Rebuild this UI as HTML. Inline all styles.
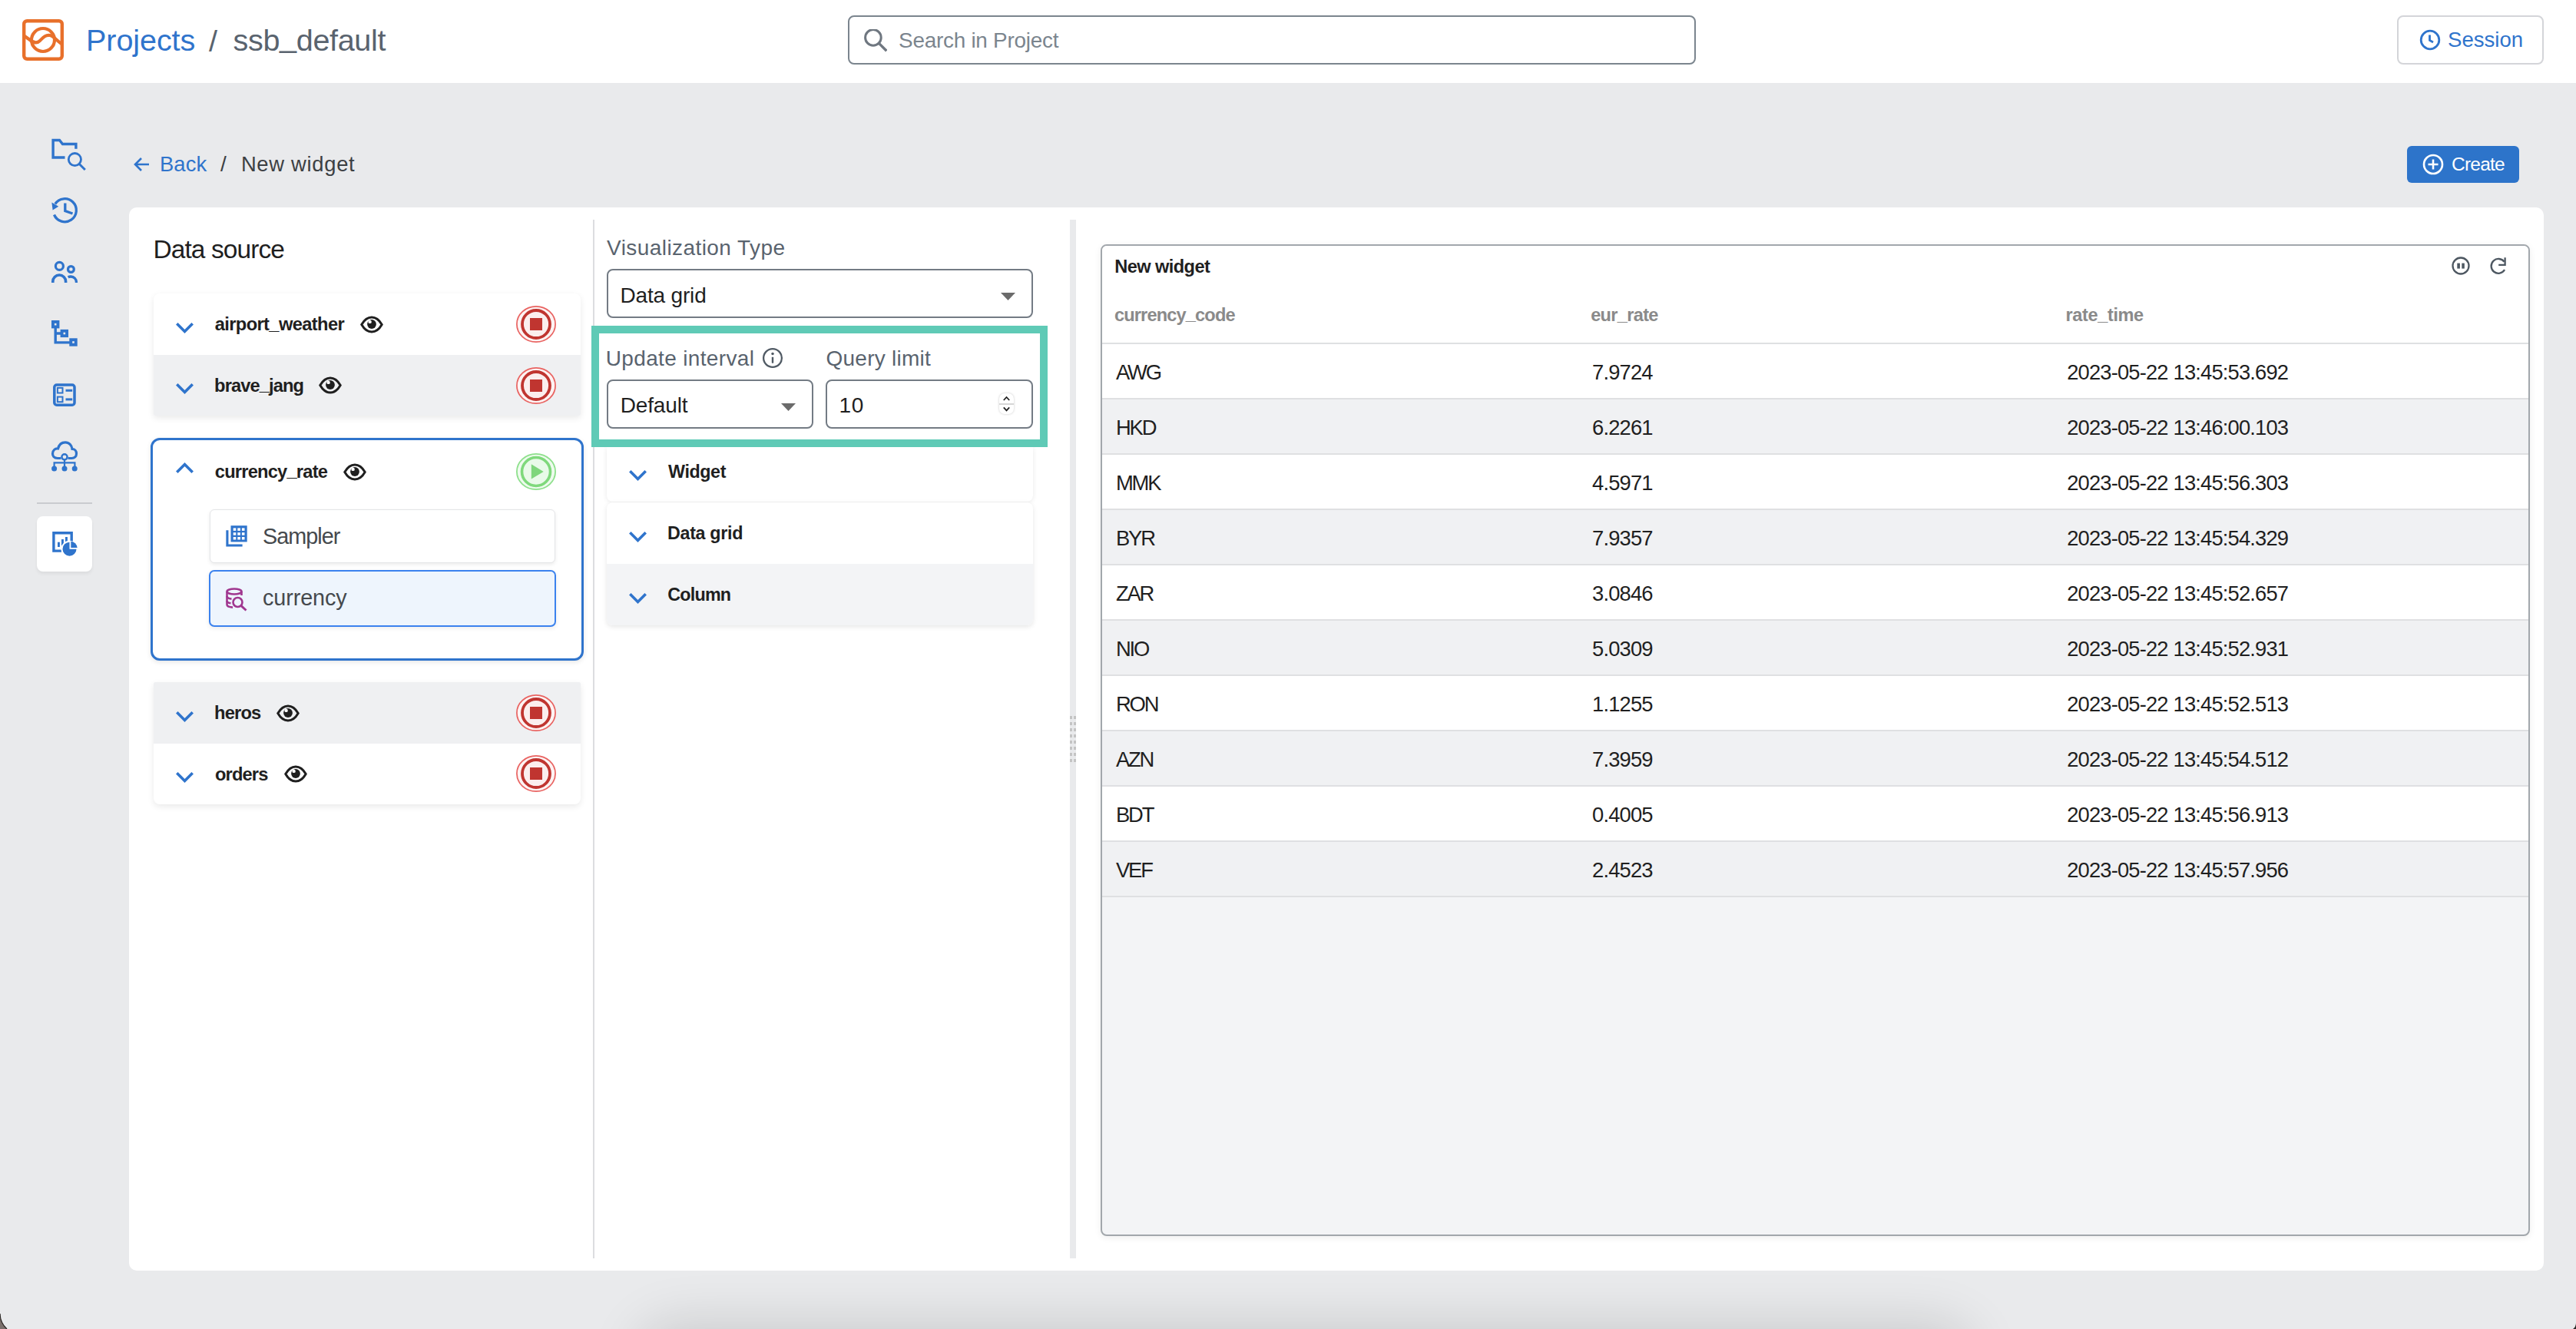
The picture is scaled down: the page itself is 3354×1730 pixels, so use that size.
<!DOCTYPE html>
<html><head><meta charset="utf-8">
<style>
*{box-sizing:border-box;margin:0;padding:0}
html,body{width:3354px;height:1730px;overflow:hidden}
body{position:relative;background:#e9eaec;font-family:"Liberation Sans",sans-serif;color:#1f1f1f}
.a{position:absolute}
.t{position:absolute;white-space:nowrap;line-height:1}
#hdr{left:0;top:0;width:3354px;height:108px;background:#fff}
#panel{left:168px;top:270px;width:3144px;height:1384px;background:#fff;border-radius:10px}
</style></head><body>
<div class="a" id="hdr"></div>

<!-- logo -->
<svg class="a" style="left:29px;top:25px" width="54" height="54" viewBox="0 0 54 54">
 <rect x="2.2" y="2.2" width="49.6" height="49.6" rx="4" fill="none" stroke="#e8702b" stroke-width="4.4"/>
 <circle cx="27" cy="27" r="15" fill="none" stroke="#e8702b" stroke-width="4.2"/>
 <path d="M3 22 L10 27 C15 31 19 32 23 28 C27 24 30 20 36 21 C41 22 44 27 51 32" fill="none" stroke="#e8702b" stroke-width="4.2"/>
</svg>
<div class="t" id="projects" style="left:112.0px;top:33.0px;font-size:39.6px;color:#2f74cc;letter-spacing:-0.1px">Projects</div>
<div class="t" id="slash1" style="left:272px;top:34px;font-size:39.6px;color:#59636e">/</div>
<div class="t" id="ssb" style="left:303.6px;top:33.0px;font-size:39.6px;color:#59636e;letter-spacing:-0.36px">ssb<span style="position:relative;top:-5px">_</span>default</div>

<!-- search -->
<div class="a" style="left:1104px;top:20px;width:1104px;height:64px;border:2px solid #7b858e;border-radius:8px"></div>
<svg class="a" style="left:1125px;top:38px" width="30" height="30" viewBox="0 0 30 30"><circle cx="11.9" cy="10.9" r="10.3" fill="none" stroke="#6f7780" stroke-width="3"/><path d="M19.4 18.4 L29.3 28.3" stroke="#6f7780" stroke-width="3.4"/></svg>
<div class="t" id="search" style="left:1170.1px;top:38.7px;font-size:27.9px;color:#7b858e;letter-spacing:-0.256px">Search in Project</div>

<!-- session -->
<div class="a" style="left:3121px;top:20px;width:191px;height:64px;border:2px solid #d4d5d9;border-radius:8px;background:#fff"></div>
<svg class="a" style="left:3150px;top:38px" width="28" height="28" viewBox="0 0 28 28"><circle cx="14" cy="14" r="11.8" fill="none" stroke="#2f74cc" stroke-width="2.8"/><path d="M13.5 7.5 V14.5 L18 17" fill="none" stroke="#2f74cc" stroke-width="2.8"/></svg>
<div class="t" id="session" style="left:3187.1px;top:37.7px;font-size:27.6px;color:#2f74cc;letter-spacing:-0.017px">Session</div>

<!-- left nav -->
<div class="a" style="left:48px;top:654px;width:72px;height:2px;background:#c9cbcf"></div>
<div class="a" style="left:48px;top:672px;width:72px;height:72px;background:#fff;border-radius:8px;box-shadow:0 3px 4px rgba(0,0,0,0.06)"></div>

<!-- breadcrumb -->
<svg class="a" style="left:173px;top:203px" width="22" height="22" viewBox="0 0 22 22"><path d="M21 11 H3 M11 3 L3 11 L11 19" fill="none" stroke="#2f74cc" stroke-width="2.6"/></svg>
<div class="t" id="back" style="left:208.0px;top:200.3px;font-size:27.4px;color:#2f74cc;letter-spacing:0.1px">Back</div>
<div class="t" id="slash2" style="left:287px;top:200px;font-size:28px;color:#3c4043">/</div>
<div class="t" id="newwidget" style="left:313.9px;top:200.3px;font-size:27.4px;color:#3c4043;letter-spacing:0.689px">New widget</div>

<!-- create -->
<div class="a" style="left:3134px;top:190px;width:146px;height:48px;background:#2d74ca;border-radius:6px"></div>
<svg class="a" style="left:3154px;top:200px" width="28" height="28" viewBox="0 0 28 28"><circle cx="14" cy="14" r="12" fill="none" stroke="#fff" stroke-width="2.6"/><path d="M14 7.5 V20.5 M7.5 14 H20.5" stroke="#fff" stroke-width="2.6"/></svg>
<div class="t" id="create" style="left:3192.0px;top:202.1px;font-size:24.5px;color:#fff;letter-spacing:-0.78px">Create</div>

<div class="a" id="panel"></div>


<!-- ===== DATA SOURCE ===== -->
<div class="t" id="dstitle" style="left:199.4px;top:307.7px;font-size:33.5px;color:#1f1f1f;letter-spacing:-0.91px">Data source</div>
<div class="a" style="left:200px;top:382px;width:556px;height:159px;border-radius:8px 8px 2px 2px;background:#fff;box-shadow:0 3px 9px rgba(0,0,0,0.085);overflow:hidden">
  <div class="a" style="left:0;top:80px;width:556px;height:79px;background:#eff0f2"></div>
</div>
<svg class="a" style="left:229px;top:420px" width="23" height="15" viewBox="0 0 23 15"><path d="M1.3 1.3 L11.5 11.5 L21.7 1.3" fill="none" stroke="#2f74cc" stroke-width="3.6"/></svg><div class="t" id="n_air" style="left:279.7px;top:411.2px;font-size:23.7px;font-weight:bold;letter-spacing:-0.621px">airport<span style="position:relative;top:-1.5px">_</span>weather</div><svg class="a" style="left:469px;top:411px" width="30" height="23" viewBox="0 0 30 23"><path d="M1.8 11.5 C5.5 5 10 2 15 2 C20 2 24.5 5 28.2 11.5 C24.5 18 20 21 15 21 C10 21 5.5 18 1.8 11.5 Z" fill="none" stroke="#1f1f1f" stroke-width="3"/><circle cx="15" cy="11" r="5.9" fill="#1f1f1f"/><circle cx="12.6" cy="7.9" r="2.2" fill="#fff"/></svg><svg class="a" style="left:671px;top:395px" width="54" height="54" viewBox="0 0 54 54"><ellipse cx="27" cy="27" rx="25.1" ry="23.1" fill="#fdf3f3" stroke="#e96361" stroke-width="1.7"/><circle cx="27" cy="27" r="18" fill="#fbeeee" stroke="#c03530" stroke-width="3.8"/><rect x="19" y="19" width="16" height="16" fill="#c03530"/></svg><svg class="a" style="left:229px;top:499px" width="23" height="15" viewBox="0 0 23 15"><path d="M1.3 1.3 L11.5 11.5 L21.7 1.3" fill="none" stroke="#2f74cc" stroke-width="3.6"/></svg><div class="t" id="n_brave" style="left:279.1px;top:490.9px;font-size:23.7px;font-weight:bold;letter-spacing:-0.9px">brave<span style="position:relative;top:-1.5px">_</span>jang</div><svg class="a" style="left:415px;top:490px" width="30" height="23" viewBox="0 0 30 23"><path d="M1.8 11.5 C5.5 5 10 2 15 2 C20 2 24.5 5 28.2 11.5 C24.5 18 20 21 15 21 C10 21 5.5 18 1.8 11.5 Z" fill="none" stroke="#1f1f1f" stroke-width="3"/><circle cx="15" cy="11" r="5.9" fill="#1f1f1f"/><circle cx="12.6" cy="7.9" r="2.2" fill="#fff"/></svg><svg class="a" style="left:671px;top:475px" width="54" height="54" viewBox="0 0 54 54"><ellipse cx="27" cy="27" rx="25.1" ry="23.1" fill="#fdf3f3" stroke="#e96361" stroke-width="1.7"/><circle cx="27" cy="27" r="18" fill="#fbeeee" stroke="#c03530" stroke-width="3.8"/><rect x="19" y="19" width="16" height="16" fill="#c03530"/></svg>
<div class="a" style="left:196px;top:570px;width:564px;height:290px;border:3.7px solid #2f74cc;border-radius:12px;background:#fff;box-shadow:0 2px 6px rgba(0,0,0,0.10)"></div>
<svg class="a" style="left:229px;top:601px" width="23" height="15" viewBox="0 0 23 15"><path d="M1.3 13.7 L11.5 3.5 L21.7 13.7" fill="none" stroke="#2f74cc" stroke-width="3.6"/></svg><div class="t" id="n_cur" style="left:279.8px;top:602.5px;font-size:23.7px;font-weight:bold;letter-spacing:-0.8px">currency<span style="position:relative;top:-1.5px">_</span>rate</div><svg class="a" style="left:447px;top:603px" width="30" height="23" viewBox="0 0 30 23"><path d="M1.8 11.5 C5.5 5 10 2 15 2 C20 2 24.5 5 28.2 11.5 C24.5 18 20 21 15 21 C10 21 5.5 18 1.8 11.5 Z" fill="none" stroke="#1f1f1f" stroke-width="3"/><circle cx="15" cy="11" r="5.9" fill="#1f1f1f"/><circle cx="12.6" cy="7.9" r="2.2" fill="#fff"/></svg><svg class="a" style="left:671px;top:587px" width="54" height="54" viewBox="0 0 54 54"><ellipse cx="27" cy="27" rx="25.1" ry="23.1" fill="#eefbee" stroke="#8ee08c" stroke-width="1.8"/><circle cx="27" cy="27" r="18.5" fill="#e9fae9" stroke="#7fd97c" stroke-width="3.6"/><path d="M20.8 17.3 L36.7 27 L20.8 36.5 Z" fill="#7fd67c"/></svg>
<div class="a" style="left:273px;top:663px;width:450px;height:70px;border:1.5px solid #e4e5e7;border-radius:6px;background:#fff;box-shadow:0 2px 5px rgba(0,0,0,0.08)"></div>
<div class="a" style="left:272px;top:742px;width:452px;height:74px;border:2px solid #3b82ee;border-radius:7px;background:#eef5fd;box-shadow:0 2px 6px rgba(0,0,0,0.08)"></div>
<svg class="a" style="left:292px;top:682px" width="32" height="32" viewBox="0 0 32 32">
 <path d="M3.9 8.3 V28 H23.6" fill="none" stroke="#2f74cc" stroke-width="3.1"/>
 <rect x="8.5" y="2.2" width="21.2" height="21.2" fill="#2f74cc"/>
 <g fill="#fff"><rect x="11.7" y="5.4" width="3.6" height="3.5"/><rect x="17.3" y="5.4" width="3.6" height="3.5"/><rect x="22.9" y="5.4" width="3.6" height="3.5"/><rect x="11.7" y="11.2" width="3.6" height="3.5"/><rect x="17.3" y="11.2" width="3.6" height="3.5"/><rect x="22.9" y="11.2" width="3.6" height="3.5"/><rect x="11.7" y="17.0" width="3.6" height="3.5"/><rect x="17.3" y="17.0" width="3.6" height="3.5"/><rect x="22.9" y="17.0" width="3.6" height="3.5"/></g>
</svg>
<div class="t" id="n_sampler" style="left:342.0px;top:683.8px;font-size:28.8px;color:#45494d;letter-spacing:-0.983px">Sampler</div>
<svg class="a" style="left:292px;top:764px" width="32" height="32" viewBox="0 0 32 32">
 <g fill="none" stroke="#a0378f" stroke-width="2.6">
  <ellipse cx="13" cy="6" rx="9.5" ry="3.5"/>
  <path d="M3.5 6 V23 C3.5 25 6.5 26.3 11 26.6"/>
  <path d="M22.5 6 V11"/>
  <path d="M3.5 12 C3.5 14 6 15.2 9.5 15.6"/>
  <path d="M3.5 18 C3.5 20 6 21 8.5 21.3"/>
  <circle cx="17.5" cy="20" r="6"/>
  <path d="M21.8 24.3 L28.5 30.5" stroke-width="3"/>
 </g>
</svg>
<div class="t" id="n_currency" style="left:342.0px;top:764.0px;font-size:28.8px;color:#45494d;letter-spacing:-0.114px">currency</div>

<div class="a" style="left:200px;top:888px;width:556px;height:159px;border-radius:2px 2px 8px 8px;background:#fff;box-shadow:0 3px 9px rgba(0,0,0,0.085);overflow:hidden">
  <div class="a" style="left:0;top:0;width:556px;height:80px;background:#eff0f2"></div>
</div>
<svg class="a" style="left:229px;top:926px" width="23" height="15" viewBox="0 0 23 15"><path d="M1.3 1.3 L11.5 11.5 L21.7 1.3" fill="none" stroke="#2f74cc" stroke-width="3.6"/></svg><div class="t" id="n_heros" style="left:279.0px;top:917.0px;font-size:23.7px;font-weight:bold;letter-spacing:-0.825px">heros</div><svg class="a" style="left:360px;top:917px" width="30" height="23" viewBox="0 0 30 23"><path d="M1.8 11.5 C5.5 5 10 2 15 2 C20 2 24.5 5 28.2 11.5 C24.5 18 20 21 15 21 C10 21 5.5 18 1.8 11.5 Z" fill="none" stroke="#1f1f1f" stroke-width="3"/><circle cx="15" cy="11" r="5.9" fill="#1f1f1f"/><circle cx="12.6" cy="7.9" r="2.2" fill="#fff"/></svg><svg class="a" style="left:671px;top:901px" width="54" height="54" viewBox="0 0 54 54"><ellipse cx="27" cy="27" rx="25.1" ry="23.1" fill="#fdf3f3" stroke="#e96361" stroke-width="1.7"/><circle cx="27" cy="27" r="18" fill="#fbeeee" stroke="#c03530" stroke-width="3.8"/><rect x="19" y="19" width="16" height="16" fill="#c03530"/></svg><svg class="a" style="left:229px;top:1005px" width="23" height="15" viewBox="0 0 23 15"><path d="M1.3 1.3 L11.5 11.5 L21.7 1.3" fill="none" stroke="#2f74cc" stroke-width="3.6"/></svg><div class="t" id="n_orders" style="left:280.0px;top:997.0px;font-size:23.7px;font-weight:bold;letter-spacing:-0.88px">orders</div><svg class="a" style="left:370px;top:996px" width="30" height="23" viewBox="0 0 30 23"><path d="M1.8 11.5 C5.5 5 10 2 15 2 C20 2 24.5 5 28.2 11.5 C24.5 18 20 21 15 21 C10 21 5.5 18 1.8 11.5 Z" fill="none" stroke="#1f1f1f" stroke-width="3"/><circle cx="15" cy="11" r="5.9" fill="#1f1f1f"/><circle cx="12.6" cy="7.9" r="2.2" fill="#fff"/></svg><svg class="a" style="left:671px;top:980px" width="54" height="54" viewBox="0 0 54 54"><ellipse cx="27" cy="27" rx="25.1" ry="23.1" fill="#fdf3f3" stroke="#e96361" stroke-width="1.7"/><circle cx="27" cy="27" r="18" fill="#fbeeee" stroke="#c03530" stroke-width="3.8"/><rect x="19" y="19" width="16" height="16" fill="#c03530"/></svg>
<div class="a" style="left:772px;top:286px;width:2px;height:1352px;background:#dcdde0"></div>
<div class="a" style="left:1393px;top:286px;width:8px;height:1352px;background:#e9eaec"></div>


<!-- ===== MIDDLE ===== -->
<div class="t" id="m_vis" style="left:790.1px;top:309.1px;font-size:28.0px;color:#59636e;letter-spacing:0.429px">Visualization Type</div>
<div class="a" style="left:790px;top:350px;width:555px;height:63.5px;border:2px solid #737b84;border-radius:8px;background:#fff"></div>
<div class="t" id="m_dg" style="left:807.5px;top:371.1px;font-size:28.0px;color:#1f1f1f;letter-spacing:-0.175px">Data grid</div>
<svg class="a" style="left:1302px;top:380px" width="21" height="12" viewBox="0 0 21 12"><path d="M1 1 H20 L10.5 11 Z" fill="#6b6b6b"/></svg>

<div class="a" style="left:770px;top:424px;width:594px;height:158px;border:10px solid #5fcab6;background:#fff"></div>
<div class="t" id="m_upd" style="left:788.8px;top:453.1px;font-size:28.0px;color:#59636e;letter-spacing:0.343px">Update interval</div>
<svg class="a" style="left:992px;top:452px" width="28" height="28" viewBox="0 0 28 28"><circle cx="14" cy="14" r="11.9" fill="none" stroke="#505a64" stroke-width="2.3"/><circle cx="14" cy="8.6" r="1.75" fill="#505a64"/><rect x="12.8" y="12.8" width="2.4" height="7.9" rx="0.6" fill="#505a64"/></svg>
<div class="t" id="m_ql" style="left:1075.5px;top:453.1px;font-size:28.0px;color:#59636e;letter-spacing:0.25px">Query limit</div>
<div class="a" style="left:790px;top:494px;width:269px;height:64px;border:2px solid #737b84;border-radius:8px;background:#fff"></div>
<div class="t" id="m_def" style="left:807.7px;top:513.8px;font-size:28.0px;color:#1f1f1f;letter-spacing:-0.15px">Default</div>
<svg class="a" style="left:1016px;top:524px" width="21" height="12" viewBox="0 0 21 12"><path d="M1 1 H20 L10.5 11 Z" fill="#6b6b6b"/></svg>
<div class="a" style="left:1075px;top:494px;width:270px;height:64px;border:2px solid #737b84;border-radius:8px;background:#fff"></div>
<div class="t" id="m_10" style="left:1092.5px;top:513.8px;font-size:28.0px;color:#1f1f1f;letter-spacing:0.8px">10</div>
<div class="a" style="left:1301px;top:512px;width:19px;height:27px;border-radius:7px;background:#fff;box-shadow:0 0 3px rgba(0,0,0,0.22)"></div>
<div class="a" style="left:1301px;top:525px;width:19px;height:1.5px;background:#d6d6d6"></div>
<svg class="a" style="left:1301px;top:512px" width="19" height="27" viewBox="0 0 19 27"><path d="M5.8 9 L9.5 5 L13.2 9 M5.8 18.3 L9.5 22.3 L13.2 18.3" fill="none" stroke="#222" stroke-width="1.8"/></svg>

<div class="a" style="left:790px;top:582px;width:555px;height:71px;border-radius:0 0 8px 8px;background:#fff;box-shadow:0 1px 6px rgba(0,0,0,0.09)"></div>
<div class="a" style="left:790px;top:654px;width:555px;height:160px;border-radius:8px;background:#fff;box-shadow:0 2px 6px rgba(0,0,0,0.10);overflow:hidden">
 <div class="a" style="left:0;top:80px;width:555px;height:80px;background:#f3f4f6"></div>
</div>
<div class="a" style="left:770px;top:572px;width:594px;height:10px;background:#5fcab6"></div>
<svg class="a" style="left:819px;top:612px" width="23" height="15" viewBox="0 0 23 15"><path d="M1.3 1.3 L11.5 11.5 L21.7 1.3" fill="none" stroke="#2f74cc" stroke-width="3.6"/></svg><div class="t" id="m_w" style="left:870.0px;top:603.4px;font-size:23.3px;font-weight:bold;letter-spacing:-0.4px">Widget</div><svg class="a" style="left:819px;top:692px" width="23" height="15" viewBox="0 0 23 15"><path d="M1.3 1.3 L11.5 11.5 L21.7 1.3" fill="none" stroke="#2f74cc" stroke-width="3.6"/></svg><div class="t" id="m_dg2" style="left:869.0px;top:683.1px;font-size:23.3px;font-weight:bold;letter-spacing:-0.325px">Data grid</div><svg class="a" style="left:819px;top:772px" width="23" height="15" viewBox="0 0 23 15"><path d="M1.3 1.3 L11.5 11.5 L21.7 1.3" fill="none" stroke="#2f74cc" stroke-width="3.6"/></svg><div class="t" id="m_col" style="left:869.3px;top:762.9px;font-size:23.3px;font-weight:bold;letter-spacing:-0.78px">Column</div>
<!-- ===== RIGHT WIDGET ===== -->
<div class="a" style="left:1433px;top:318px;width:1861px;height:1291px;border:2px solid #a2a7ac;border-radius:8px;background:#f3f4f6;box-shadow:0 2px 10px rgba(0,0,0,0.07);overflow:hidden">
 <div class="a" style="left:0;top:0;width:1857px;height:848px;background:#fff"></div>
 <div class="a" style="left:0;top:126px;width:1857px;height:72px;background:#fff;border-top:2px solid #dfe0e2"></div>
 <div class="a" style="left:0;top:198px;width:1857px;height:72px;background:#f0f1f3;border-top:2px solid #dfe0e2"></div>
 <div class="a" style="left:0;top:270px;width:1857px;height:72px;background:#fff;border-top:2px solid #dfe0e2"></div>
 <div class="a" style="left:0;top:342px;width:1857px;height:72px;background:#f0f1f3;border-top:2px solid #dfe0e2"></div>
 <div class="a" style="left:0;top:414px;width:1857px;height:72px;background:#fff;border-top:2px solid #dfe0e2"></div>
 <div class="a" style="left:0;top:486px;width:1857px;height:72px;background:#f0f1f3;border-top:2px solid #dfe0e2"></div>
 <div class="a" style="left:0;top:558px;width:1857px;height:72px;background:#fff;border-top:2px solid #dfe0e2"></div>
 <div class="a" style="left:0;top:630px;width:1857px;height:72px;background:#f0f1f3;border-top:2px solid #dfe0e2"></div>
 <div class="a" style="left:0;top:702px;width:1857px;height:72px;background:#fff;border-top:2px solid #dfe0e2"></div>
 <div class="a" style="left:0;top:774px;width:1857px;height:72px;background:#f0f1f3;border-top:2px solid #dfe0e2"></div>
 <div class="a" style="left:0;top:846px;width:1857px;height:2px;background:#dfe0e2"></div>
</div>
<div class="t" id="r_title" style="left:1451.2px;top:335.9px;font-size:23.6px;font-weight:bold;letter-spacing:-0.567px">New widget</div>
<svg class="a" style="left:3190px;top:332px" width="80" height="28" viewBox="0 0 80 28">
 <circle cx="14" cy="14" r="10.5" fill="none" stroke="#4d5761" stroke-width="2.3"/>
 <rect x="9.3" y="10.6" width="3.6" height="7" fill="#4d5761"/><rect x="15.3" y="10.6" width="3.5" height="7" fill="#4d5761"/>
 <path d="M70.6 8.8 A9.4 9.4 0 1 0 71.1 19.2" fill="none" stroke="#4d5761" stroke-width="2.3"/>
 <path d="M71.6 3.3 V12.8 H63.2" fill="none" stroke="#4d5761" stroke-width="2.3"/>
</svg>
<div class="t" id="h_cc" style="left:1450.9px;top:398.9px;font-size:23.6px;font-weight:bold;color:#8a8a8a;letter-spacing:-0.85px">currency<span style="position:relative;top:-1.5px">_</span>code</div>
<div class="t" id="h_er" style="left:2071.2px;top:399.0px;font-size:23.6px;font-weight:bold;color:#8a8a8a;letter-spacing:-0.7px">eur<span style="position:relative;top:-1.5px">_</span>rate</div>
<div class="t" id="h_rt" style="left:2689.6px;top:399.0px;font-size:23.6px;font-weight:bold;color:#8a8a8a;letter-spacing:-0.412px">rate<span style="position:relative;top:-1.5px">_</span>time</div>
<div class="t" id="d0a" style="left:1453.0px;top:470.9px;font-size:27.4px;letter-spacing:-2.2px">AWG</div><div class="t" id="d0b" style="left:2073.0px;top:470.8px;font-size:27.4px;letter-spacing:-0.855px">7.9724</div><div class="t" id="d0c" style="left:2691.2px;top:470.7px;font-size:27.4px;letter-spacing:-0.855px">2023-05-22 13:45:53.692</div>
<div class="t" id="d1a" style="left:1453.0px;top:542.9px;font-size:27.4px;letter-spacing:-2.2px">HKD</div><div class="t" id="d1b" style="left:2073.0px;top:542.8px;font-size:27.4px;letter-spacing:-0.855px">6.2261</div><div class="t" id="d1c" style="left:2691.2px;top:542.7px;font-size:27.4px;letter-spacing:-0.855px">2023-05-22 13:46:00.103</div>
<div class="t" id="d2a" style="left:1453.0px;top:614.9px;font-size:27.4px;letter-spacing:-2.2px">MMK</div><div class="t" id="d2b" style="left:2073.0px;top:614.8px;font-size:27.4px;letter-spacing:-0.855px">4.5971</div><div class="t" id="d2c" style="left:2691.2px;top:614.7px;font-size:27.4px;letter-spacing:-0.855px">2023-05-22 13:45:56.303</div>
<div class="t" id="d3a" style="left:1453.0px;top:686.9px;font-size:27.4px;letter-spacing:-2.2px">BYR</div><div class="t" id="d3b" style="left:2073.0px;top:686.8px;font-size:27.4px;letter-spacing:-0.855px">7.9357</div><div class="t" id="d3c" style="left:2691.2px;top:686.7px;font-size:27.4px;letter-spacing:-0.855px">2023-05-22 13:45:54.329</div>
<div class="t" id="d4a" style="left:1453.0px;top:758.9px;font-size:27.4px;letter-spacing:-2.2px">ZAR</div><div class="t" id="d4b" style="left:2073.0px;top:758.8px;font-size:27.4px;letter-spacing:-0.855px">3.0846</div><div class="t" id="d4c" style="left:2691.2px;top:758.7px;font-size:27.4px;letter-spacing:-0.855px">2023-05-22 13:45:52.657</div>
<div class="t" id="d5a" style="left:1453.0px;top:830.9px;font-size:27.4px;letter-spacing:-2.2px">NIO</div><div class="t" id="d5b" style="left:2073.0px;top:830.8px;font-size:27.4px;letter-spacing:-0.855px">5.0309</div><div class="t" id="d5c" style="left:2691.2px;top:830.7px;font-size:27.4px;letter-spacing:-0.855px">2023-05-22 13:45:52.931</div>
<div class="t" id="d6a" style="left:1453.0px;top:902.9px;font-size:27.4px;letter-spacing:-2.2px">RON</div><div class="t" id="d6b" style="left:2073.0px;top:902.8px;font-size:27.4px;letter-spacing:-0.855px">1.1255</div><div class="t" id="d6c" style="left:2691.2px;top:902.7px;font-size:27.4px;letter-spacing:-0.855px">2023-05-22 13:45:52.513</div>
<div class="t" id="d7a" style="left:1453.0px;top:974.9px;font-size:27.4px;letter-spacing:-2.2px">AZN</div><div class="t" id="d7b" style="left:2073.0px;top:974.8px;font-size:27.4px;letter-spacing:-0.855px">7.3959</div><div class="t" id="d7c" style="left:2691.2px;top:974.7px;font-size:27.4px;letter-spacing:-0.855px">2023-05-22 13:45:54.512</div>
<div class="t" id="d8a" style="left:1453.0px;top:1046.9px;font-size:27.4px;letter-spacing:-2.2px">BDT</div><div class="t" id="d8b" style="left:2073.0px;top:1046.8px;font-size:27.4px;letter-spacing:-0.855px">0.4005</div><div class="t" id="d8c" style="left:2691.2px;top:1046.7px;font-size:27.4px;letter-spacing:-0.855px">2023-05-22 13:45:56.913</div>
<div class="t" id="d9a" style="left:1453.0px;top:1118.9px;font-size:27.4px;letter-spacing:-2.2px">VEF</div><div class="t" id="d9b" style="left:2073.0px;top:1118.8px;font-size:27.4px;letter-spacing:-0.855px">2.4523</div><div class="t" id="d9c" style="left:2691.2px;top:1118.7px;font-size:27.4px;letter-spacing:-0.855px">2023-05-22 13:45:57.956</div>
<svg class="a" style="left:1393px;top:932px" width="8" height="62" viewBox="0 0 8 62"><rect x="0" y="0" width="3" height="4" fill="#c4c4c4"/><rect x="5" y="0" width="3" height="4" fill="#c4c4c4"/><rect x="0" y="8" width="3" height="4" fill="#c4c4c4"/><rect x="5" y="8" width="3" height="4" fill="#c4c4c4"/><rect x="0" y="16" width="3" height="4" fill="#c4c4c4"/><rect x="5" y="16" width="3" height="4" fill="#c4c4c4"/><rect x="0" y="24" width="3" height="4" fill="#c4c4c4"/><rect x="5" y="24" width="3" height="4" fill="#c4c4c4"/><rect x="0" y="32" width="3" height="4" fill="#c4c4c4"/><rect x="5" y="32" width="3" height="4" fill="#c4c4c4"/><rect x="0" y="40" width="3" height="4" fill="#c4c4c4"/><rect x="5" y="40" width="3" height="4" fill="#c4c4c4"/><rect x="0" y="48" width="3" height="4" fill="#c4c4c4"/><rect x="5" y="48" width="3" height="4" fill="#c4c4c4"/><rect x="0" y="56" width="3" height="4" fill="#c4c4c4"/><rect x="5" y="56" width="3" height="4" fill="#c4c4c4"/></svg>

<!-- ===== LEFT NAV ICONS ===== -->
<svg class="a" style="left:0;top:0" width="130" height="760" viewBox="0 0 130 760">
 <g fill="none" stroke="#2f74cc" stroke-width="3.4" stroke-linejoin="miter">
  <path d="M84.5 205 H69.1 V182.5 H77.5 L81.5 187.5 H98.9 V193.7"/>
  <circle cx="97.4" cy="207.6" r="8.1" stroke-width="2.8"/>
  <path d="M103.3 213.5 L110.8 221" stroke-width="3"/>
 </g>
 <g fill="none" stroke="#2f74cc" stroke-width="3.3">
  <path d="M70.5 279.5 A15 15 0 1 0 71.8 265.5"/>
  <path d="M84.8 264.5 V274.5 L94.5 278"/>
 </g>
 <path d="M67.4 263.6 L76.2 268.8 L68.6 273.4 Z" fill="#2f74cc"/>
 <g fill="none" stroke="#2f74cc" stroke-width="3.2">
  <circle cx="77.4" cy="346.4" r="5.0"/>
  <path d="M68.8 368 V366.4 A8.4 8.4 0 0 1 85.6 366.4 V368" stroke-width="3.6"/>
  <circle cx="92.4" cy="350.5" r="3.9"/>
  <path d="M88.6 360.8 C90 360.1 91.2 360 92.3 360 A7.1 7.1 0 0 1 99.4 367.1 V368" stroke-width="3.3"/>
 </g>
 <g fill="#2f74cc">
  <rect x="67" y="417" width="10.4" height="10.4"/>
  <rect x="78.6" y="428.9" width="10.4" height="10.2"/>
  <rect x="90.3" y="440.3" width="10.4" height="10.4"/>
 </g>
 <g fill="#e9eaec"><rect x="70.9" y="420.9" width="2.6" height="2.6"/><rect x="82.5" y="432.7" width="2.6" height="2.6"/><rect x="94.2" y="444.2" width="2.6" height="2.6"/></g>
 <path d="M72.2 427 V445.9 H91 M72.2 434 H79" fill="none" stroke="#2f74cc" stroke-width="3.4"/>
 <rect x="70.8" y="501" width="26.2" height="26.2" rx="3" fill="none" stroke="#2f74cc" stroke-width="3.5"/>
 <rect x="74.9" y="504.9" width="6.6" height="6.6" fill="none" stroke="#2f74cc" stroke-width="2"/>
 <rect x="74.9" y="516.6" width="6.6" height="6.6" fill="none" stroke="#2f74cc" stroke-width="2"/>
 <rect x="85.5" y="506.8" width="8.7" height="3" fill="#2f74cc"/>
 <rect x="85.5" y="518.4" width="8.7" height="3" fill="#2f74cc"/>
 <g fill="none" stroke="#2f74cc" stroke-width="3.2">
  <path d="M79.5 596.5 H75 C70 596.5 68.5 593 68.5 590.5 C68.5 586 72 583.5 75.5 584 C77 578 81 575.8 85 575.8 C90 575.8 93.5 580 94 584.5 C97.5 584.5 99.5 587.5 99.5 590.5 C99.5 594 97 596.5 93.5 596.5 H88.5"/>
 </g>
 <circle cx="84" cy="594.8" r="3.6" fill="none" stroke="#2f74cc" stroke-width="2.4"/>
 <path d="M84 598.4 V610 M70.6 610 V602.3 H97.4 V610" fill="none" stroke="#2f74cc" stroke-width="2.2"/>
 <circle cx="70.6" cy="610" r="3.5" fill="#2f74cc"/><circle cx="84" cy="610" r="3.5" fill="#2f74cc"/><circle cx="97.2" cy="610" r="3.5" fill="#2f74cc"/>
 <path d="M80 717.1 H69.9 V693.7 H93.2 V705" fill="none" stroke="#2f74cc" stroke-width="3.4"/>
 <rect x="75" y="705.7" width="2.9" height="6.3" fill="#2f74cc"/>
 <rect x="80" y="702" width="2.9" height="8" fill="#2f74cc"/>
 <rect x="85" y="699" width="2.9" height="8" fill="#2f74cc"/>
 <circle cx="90.5" cy="714.7" r="11" fill="#fff"/>
 <path d="M90.5 705.7 V714.7 H99.5 A9 9 0 1 1 90.5 705.7 Z" fill="#2f74cc"/>
 <path d="M92.3 704.4 A9.5 9.5 0 0 1 100.6 712.9 H92.3 Z" fill="#2f74cc"/>
</svg>



<!-- bottom dock shadow & window corners -->
<div class="a" style="left:860px;top:1752px;width:1680px;height:40px;border-radius:40px;box-shadow:0 0 70px 28px rgba(0,0,0,0.14)"></div>
<svg class="a" style="left:0;top:1690px" width="40" height="40" viewBox="0 0 40 40"><path d="M0 20 A28 28 0 0 0 9 40 L0 40 Z" fill="#7b706c"/><path d="M0 20 A28 28 0 0 0 9 40" fill="none" stroke="#2b2624" stroke-width="1.2"/></svg>
<svg class="a" style="left:3344px;top:1720px" width="10" height="10" viewBox="0 0 10 10"><path d="M10 2 A10 10 0 0 1 6 10 L10 10 Z" fill="#2b2624"/></svg>
</body></html>
